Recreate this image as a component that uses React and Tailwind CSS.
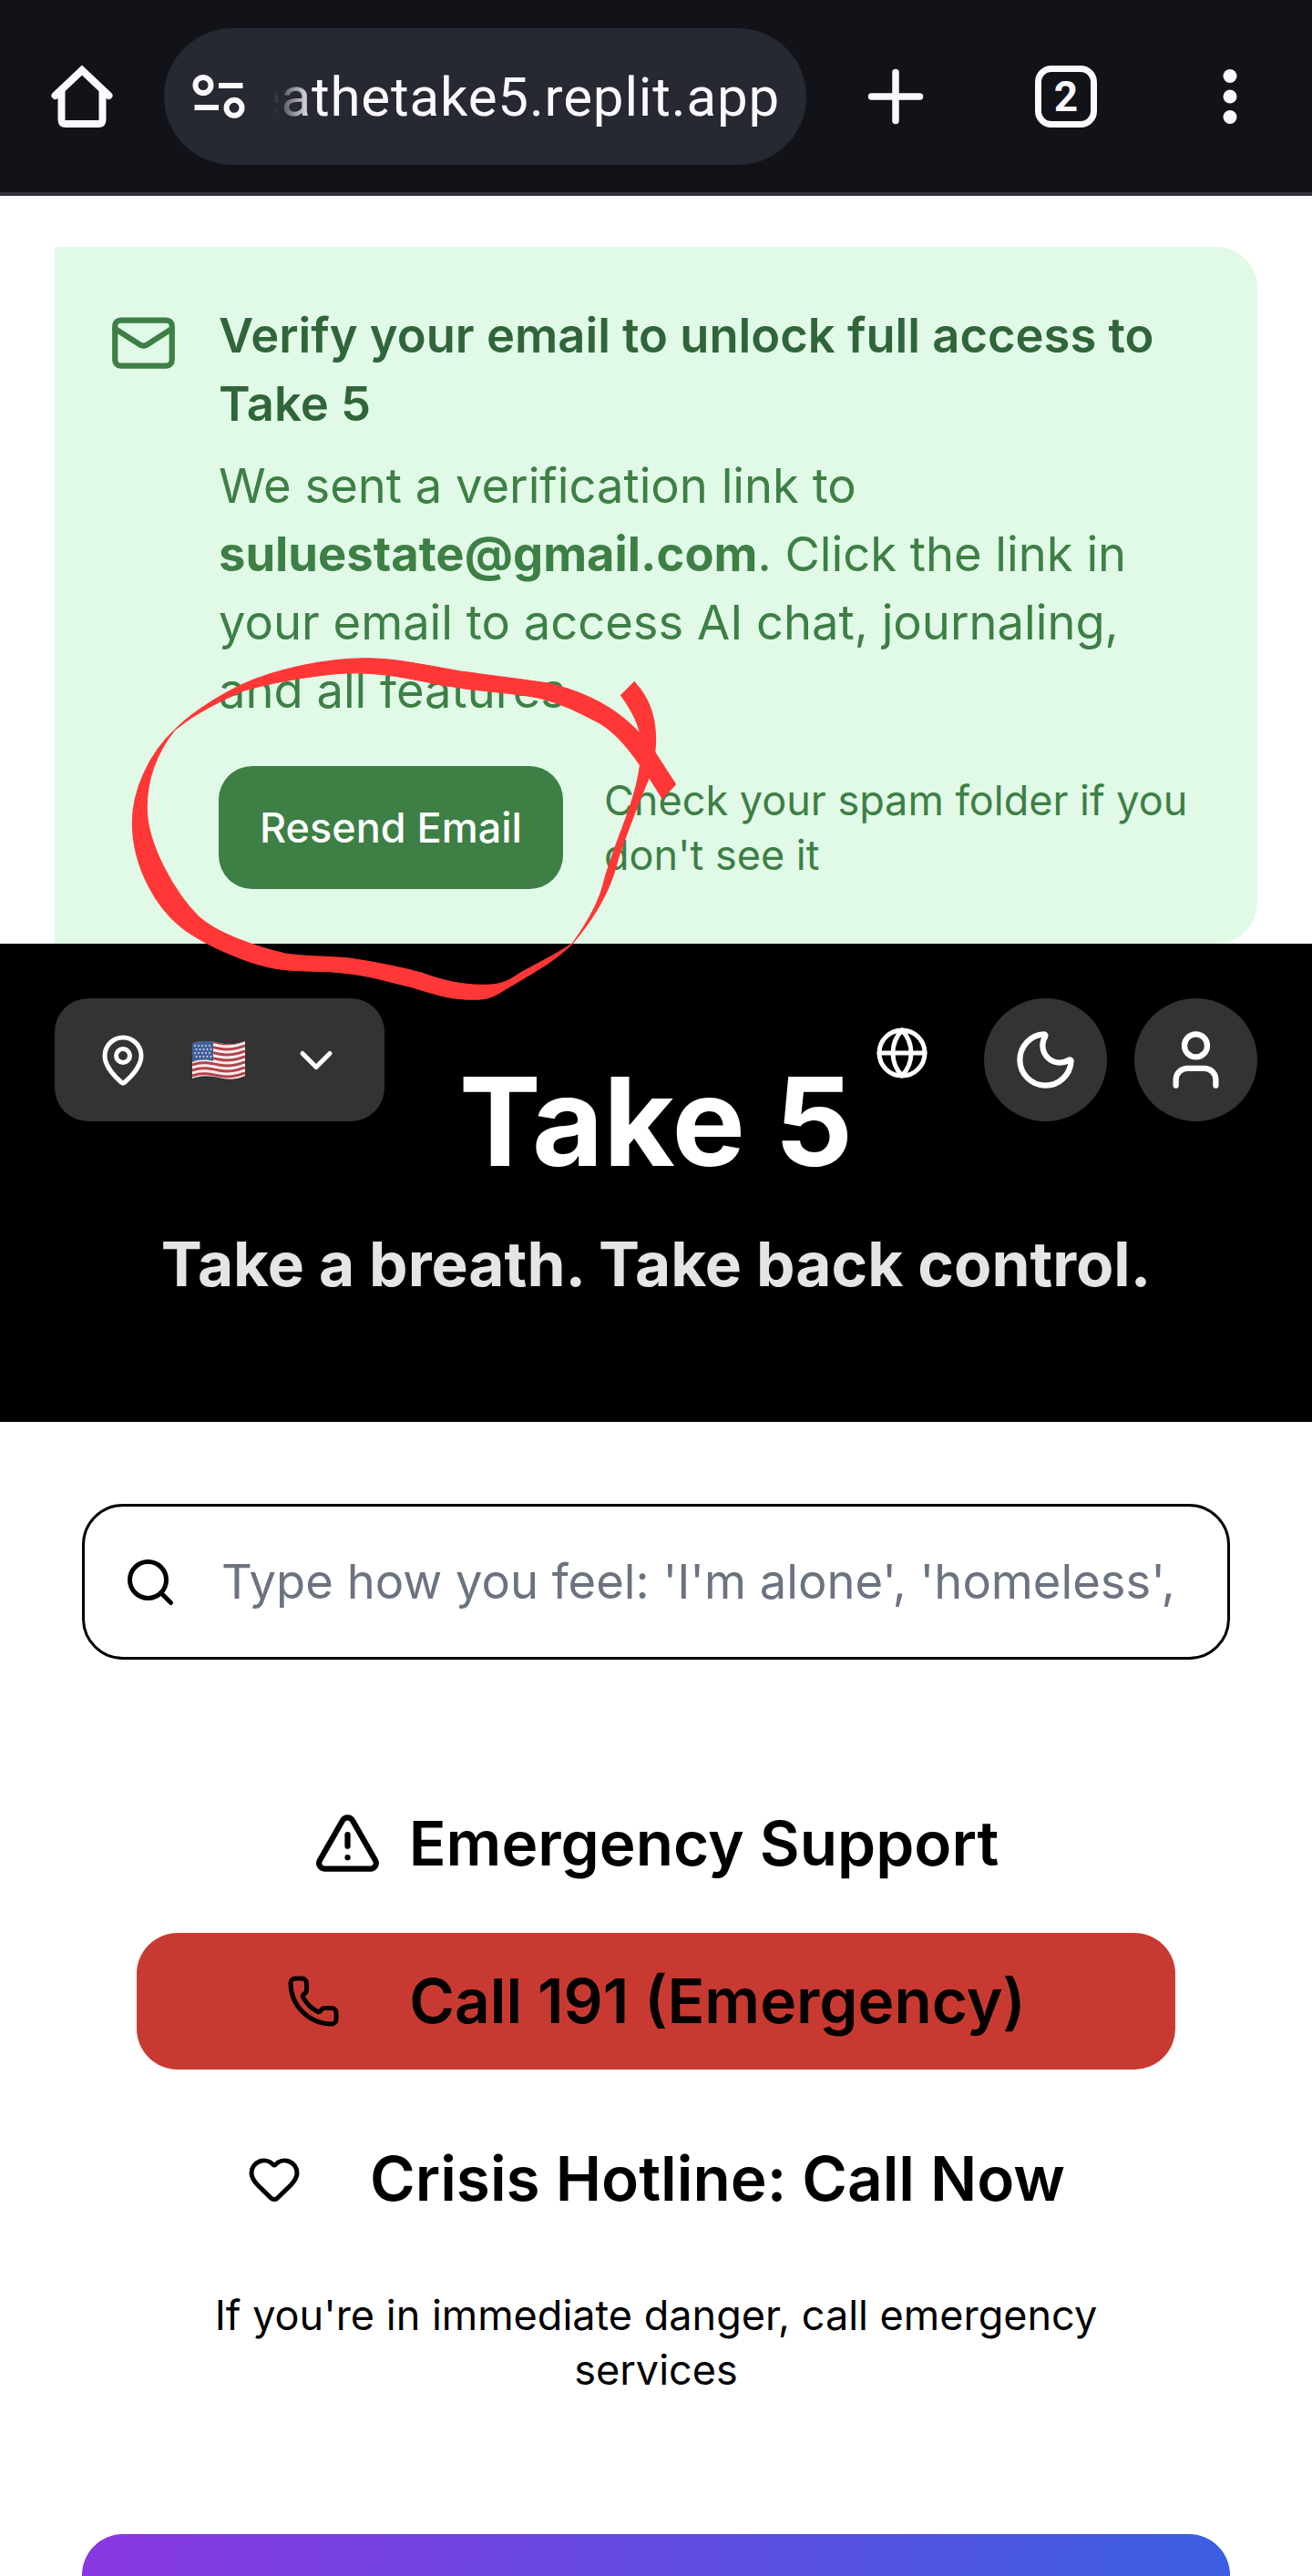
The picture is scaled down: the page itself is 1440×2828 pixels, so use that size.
import React from "react";
import { Mail, MapPin, ChevronDown, Globe, Moon, User, Search, TriangleAlert, Phone, Heart } from "lucide-react";

function HomeIcon() {
  return (
    <svg width="72" height="72" viewBox="54 70 72 72" fill="none" stroke="#fbf8ff" strokeWidth="8" strokeLinecap="round">
      <path d="M60.500 105 L90 77 L119.500 105" strokeLinejoin="miter" />
      <path d="M67.500 99 V131 Q67.500 136 72 136 H108 Q112.500 136 112.500 131 V99" strokeLinecap="butt" />
    </svg>
  );
}

function TuneIcon() {
  return (
    <svg width="60" height="60" viewBox="210 76 60 60" fill="none" stroke="#fbf8ff" strokeWidth="6">
      <circle cx="223" cy="93.500" r="8.500" />
      <path d="M240 94 H266.500" />
      <circle cx="257" cy="118.300" r="8.500" />
      <path d="M213.500 118 H240" />
    </svg>
  );
}

function BrowserBar() {
  return (
    <div className="flex h-[215px] items-center border-b-4 border-[#323238] bg-[#121318] pl-[54px] text-[#fbf8ff]">
      <HomeIcon />
      <div className="ml-[54px] flex h-[150px] w-[705px] items-center rounded-full bg-[#262932] pl-[30px]">
        <TuneIcon />
        <div className="ml-[30px] mt-[3px] flex w-[556px] justify-end whitespace-nowrap font-['Roboto',sans-serif] text-[60px] leading-[80px] [mask-image:linear-gradient(to_right,transparent,black_44px)]">
          <span className="tracking-[0.85px]">eathetake5.replit.app</span>
        </div>
      </div>
      <svg className="ml-[64px]" width="68" height="68" viewBox="0 0 68 68" stroke="currentColor" strokeWidth="7.500" strokeLinecap="round">
        <path d="M34 7.500 V60.500 M7.500 34 H60.500" />
      </svg>
      <div className="ml-[119px] flex h-[68px] w-[68px] items-center justify-center rounded-[18px] border-[7.5px] border-[#fbf8ff] font-['Roboto',sans-serif] text-[46px] font-bold leading-none">
        2
      </div>
      <svg className="ml-[136px]" width="20" height="68" viewBox="0 0 20 68" fill="currentColor">
        <circle cx="10" cy="11.500" r="7.500" />
        <circle cx="10" cy="34" r="7.500" />
        <circle cx="10" cy="56.500" r="7.500" />
      </svg>
    </div>
  );
}

function Annotation() {
  return (
    <svg
      className="pointer-events-none absolute left-[60px] top-[409px]"
      width="700"
      height="440"
      viewBox="0 0 1568 1320"
      preserveAspectRatio="none"
      fill="#ff3737"
      stroke="#ff3737"
      strokeWidth="3"
    >
      <path d="M1392 543 L1341 437 L1305 377 C1260 310 1190 245 1078 210 C980 190 920 182 860 170 C740 140 690 128 630 128 C520 128 400 170 330 212 C240 270 185 330 160 365 C200 320 260 275 330 235 C400 208 520 178 600 176 C700 176 760 205 850 223 C900 235 980 240 1055 258 C1120 280 1160 310 1210 345 C1240 370 1270 410 1305 480 L1327 520 L1360 590 Z" />
      <path d="M160 365 C100 440 57 560 57 670 C57 800 110 970 215 1048 C260 1085 340 1130 385 1143 C420 1157 480 1158 540 1160 C620 1165 690 1195 740 1210 C790 1230 830 1252 893 1252 C930 1252 945 1243 975 1217 C1060 1150 1100 1120 1140 1065 C1200 970 1235 880 1250 790 C1280 670 1315 560 1327 520 L1341 437 C1348 350 1335 270 1291 206 L1258 250 C1285 300 1300 340 1305 377 L1305 480 C1295 600 1240 740 1215 870 C1205 925 1180 990 1140 1065 C1110 1095 1070 1120 1010 1165 C985 1188 965 1204 925 1204 C880 1205 830 1195 770 1165 C730 1150 660 1130 590 1116 C540 1108 480 1112 430 1100 C380 1085 270 1040 220 980 C160 900 92 740 92 620 C92 540 110 450 160 365 Z" />
    </svg>
  );
}

function VerifyBanner() {
  return (
    <section className="relative z-10 mx-[60px] mt-[56px] flex h-[765px] rounded-r-[45px] bg-[#e1f9e7] p-[60px] text-[#3d7f45]">
      <Mail className="mt-[7.500px] shrink-0" size={75} strokeWidth={2} />
      <div className="ml-[45px] whitespace-nowrap text-[52.5px] leading-[75px]">
        <h2 className="font-semibold text-[#30653a]">
          Verify your email to unlock full access to<br />Take 5
        </h2>
        <p className="mt-[15px]">
          We sent a verification link to<br />
          <strong className="font-bold">suluestate@gmail.com</strong>. Click the link in<br />
          your email to access AI chat, journaling,<br />
          and all features.
        </p>
        <div className="mt-[45px] flex items-center gap-[45px] text-[45px] leading-[60px]">
          <button className="h-[135px] w-[378px] rounded-[37px] bg-[#3d7f45] font-medium text-white">Resend Email</button>
          <p>Check your spam folder if you<br />don't see it</p>
        </div>
      </div>
      <Annotation />
    </section>
  );
}

function UsFlag() {
  return (
    <svg width="58" height="42" viewBox="0 0 58 42">
      <defs>
        <clipPath id="flag-wave">
          <path d="M0 3 C10 -2 20 0 29 2 C39 4 48 4 58 0 V38 C48 43 38 42 29 40 C20 38 10 37 0 41 Z" />
        </clipPath>
      </defs>
      <g clipPath="url(#flag-wave)">
        <rect width="58" height="42" fill="#f5eef0" />
        <g fill="none" stroke="#b5424a" strokeWidth="3">
          {[1, 7, 13, 19, 25, 31, 37, 42].map((y) => (
            <path key={y} d={`M0 ${y + 1} C10 ${y - 3} 20 ${y - 1} 29 ${y + 1} C39 ${y + 3} 48 ${y + 2} 58 ${y - 2}`} />
          ))}
        </g>
        <path d="M0 0 H23 V22 C15 20 8 20 0 23 Z" fill="#42609a" />
        <g fill="#dfe6f2">
          {[5, 9, 13, 17].map((y) =>
            [3, 7, 11, 15, 19].map((x) => <circle key={`${x}-${y}`} cx={x + (y % 8 === 1 ? 1.5 : 0)} cy={y} r="0.900" />)
          )}
        </g>
      </g>
    </svg>
  );
}

function Header() {
  return (
    <header className="relative flex h-[525px] flex-col items-center bg-black pt-[120px] text-white">
      <div className="absolute inset-x-[60px] top-[60px] flex h-[135px] items-center">
        <button className="flex h-full w-[362px] items-center rounded-[37px] bg-[#333333] px-[45px]">
          <MapPin size={60} />
          <span className="ml-[46px]"><UsFlag /></span>
          <ChevronDown className="ml-auto" size={60} />
        </button>
        <Globe className="mb-[15px] ml-auto" size={60} />
        <button className="ml-[60px] flex h-[135px] w-[135px] items-center justify-center rounded-full bg-[#333333]">
          <Moon size={75} />
        </button>
        <button className="ml-[30px] flex h-[135px] w-[135px] items-center justify-center rounded-full bg-[#333333]">
          <User size={75} />
        </button>
      </div>
      <h1 className="text-[135px] font-bold leading-[150px]">Take 5</h1>
      <p className="mt-[29px] text-[67.5px] font-bold leading-[105px] text-[#e5e5e5]">Take a breath. Take back control.</p>
    </header>
  );
}

export default function App() {
  return (
    <div className="h-[2828px] w-[1440px] overflow-hidden bg-white font-['Inter',sans-serif] text-black">
      <BrowserBar />
      <VerifyBanner />
      <Header />
      <main className="px-[90px] pt-[90px]">
        <div className="flex h-[171px] items-center rounded-[45px] border-[3px] border-black pl-[42px]">
          <Search size={60} />
          <span className="ml-[48px] whitespace-nowrap text-[52.5px] leading-[75px] text-[#6b7280]">
            Type how you feel: 'I'm alone', 'homeless',
          </span>
        </div>
        <section className="mt-[149px] px-[60px] text-[67.5px] font-semibold leading-[105px]">
          <h2 className="flex items-center justify-center gap-[30px] whitespace-nowrap">
            <TriangleAlert size={75} />
            Emergency Support
          </h2>
          <button className="mt-[46px] flex h-[150px] w-full items-center justify-center gap-[75px] whitespace-nowrap rounded-[45px] bg-[#c83a31] pb-px">
            <Phone size={60} />
            Call 191 (Emergency)
          </button>
          <button className="mt-[45px] flex h-[150px] w-full items-center justify-center gap-[75px] whitespace-nowrap pb-px">
            <Heart size={60} />
            Crisis Hotline: Call Now
          </button>
          <p className="mt-[45px] text-center text-[45px] font-normal leading-[60px]">
            If you're in immediate danger, call emergency<br />services
          </p>
        </section>
        <div className="mt-[150px] h-[600px] rounded-[45px] bg-[linear-gradient(100deg,#8a38e0,#3561e3)]" />
      </main>
    </div>
  );
}
